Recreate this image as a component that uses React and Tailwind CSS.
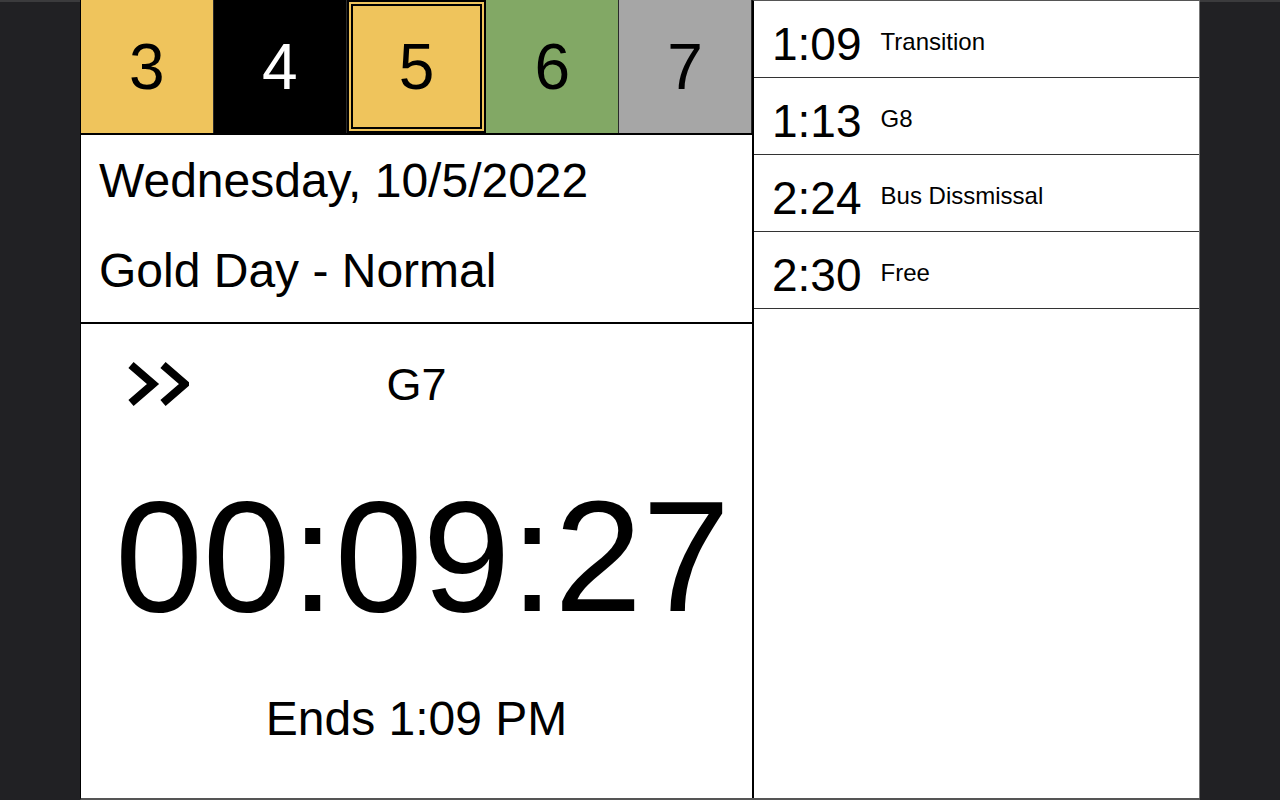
import React from "react";

const tiles = [
  { n: "3", bg: "bg-[#efc45c]", text: "text-black" },
  { n: "4", bg: "bg-black", text: "text-white" },
  { n: "5", bg: "bg-[#efc45c]", text: "text-black", current: true },
  { n: "6", bg: "bg-[#82a865]", text: "text-black" },
  { n: "7", bg: "bg-[#a6a6a6]", text: "text-black" },
];

const upcoming = [
  { time: "1:09", label: "Transition" },
  { time: "1:13", label: "G8" },
  { time: "2:24", label: "Bus Dissmissal" },
  { time: "2:30", label: "Free" },
];

function SkipIcon() {
  return (
    <svg width="62" height="46" viewBox="0 0 62 46" fill="none">
      <polyline
        points="4,4 26,23 4,42"
        stroke="black"
        strokeWidth="8"
        strokeLinejoin="miter"
      />
      <polyline
        points="36,4 58,23 36,42"
        stroke="black"
        strokeWidth="8"
        strokeLinejoin="miter"
      />
    </svg>
  );
}

function Tile({ tile }) {
  if (tile.current) {
    return (
      <div className={`flex-1 ${tile.bg} border-2 border-black p-[2px]`}>
        <div className="h-full w-full border-2 border-black flex items-center justify-center">
          <span className={`text-[64px] leading-none ${tile.text}`}>{tile.n}</span>
        </div>
      </div>
    );
  }
  return (
    <div
      className={`flex-1 ${tile.bg} border-r border-[#2a2a2a] flex items-center justify-center`}
    >
      <span className={`text-[64px] leading-none ${tile.text}`}>{tile.n}</span>
    </div>
  );
}

export default function App() {
  return (
    <div
      className="h-screen w-full flex justify-center bg-[linear-gradient(#3b3b3d_0_2px,#212124_2px)] overflow-hidden"
      style={{ fontFamily: '"Liberation Sans", Arial, sans-serif' }}
    >
      <div className="w-[1120px] h-full flex border-l border-black border-b-2 border-b-[#555]">
        {/* left column */}
        <div className="w-[671px] flex flex-col bg-white">
          <div className="h-[135px] flex border-b-2 border-black">
            {tiles.map((t) => (
              <Tile key={t.n} tile={t} />
            ))}
          </div>

          <div className="h-[189px] border-b-2 border-black pl-[18px] pt-[22px]">
            <div className="text-[48px] leading-none">Wednesday, 10/5/2022</div>
            <div className="text-[48px] leading-none mt-[42px]">Gold Day - Normal</div>
          </div>

          <div className="flex-1 flex flex-col">
            <div className="mt-[36px] h-[48px] grid grid-cols-3 items-center">
              <div className="pl-[46px] flex items-center">
                <SkipIcon />
              </div>
              <div className="text-center text-[45px] leading-none">G7</div>
              <div />
            </div>
            <div className="mt-[69px] pl-[12px] text-center text-[158px] leading-none">
              00:09:27
            </div>
            <div className="mt-[60px] text-center text-[48px] leading-none">Ends 1:09 PM</div>
          </div>
        </div>

        {/* right column */}
        <div className="flex-1 bg-white border-l-2 border-black border-r border-r-[#777] border-t border-t-[#555]">
          {upcoming.map((row) => (
            <div
              key={row.time}
              className="h-[77px] flex items-start pl-[18px] border-b border-[#333]"
            >
              <span className="mt-[20px] text-[46px] leading-none">{row.time}</span>
              <span className="mt-[29px] ml-[19px] text-[24px] leading-none">{row.label}</span>
            </div>
          ))}
        </div>
      </div>
    </div>
  );
}
